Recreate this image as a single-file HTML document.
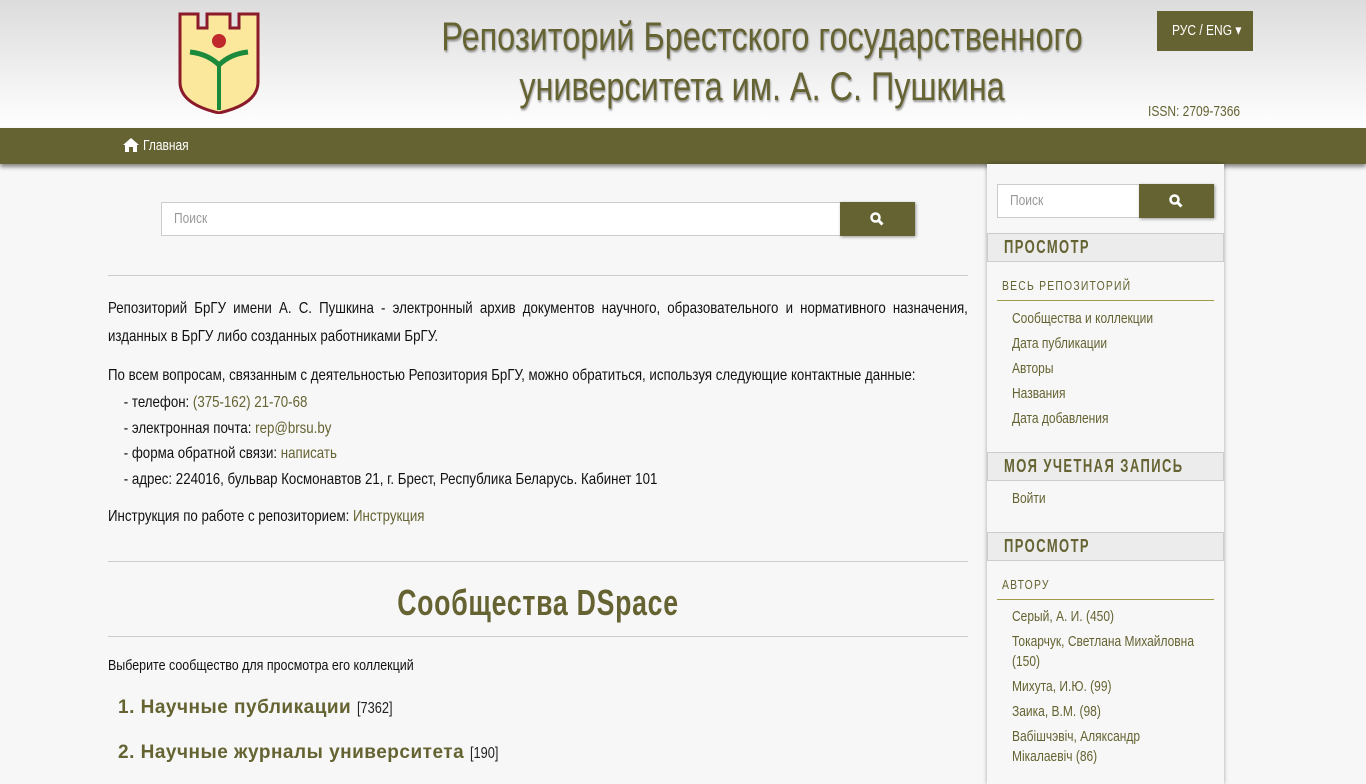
<!DOCTYPE html>
<html><head><meta charset="utf-8"><style>
*{box-sizing:border-box;margin:0;padding:0}
body{width:1366px;height:768px;overflow:hidden;background:#f7f7f7;font-family:"Liberation Sans",sans-serif;color:#111;font-size:16px;position:relative}
a{color:#656332;text-decoration:none}
.n{transform:scaleX(.8);transform-origin:0 0}
.m{transform:scaleX(.83);transform-origin:0 0}
.hdr{position:absolute;left:0;top:0;width:1366px;height:128px;background:linear-gradient(#dcdcdc,#fff)}
.title{position:absolute;left:262px;top:12px;width:1000px;text-align:center;font-size:40px;line-height:50px;color:#656332;text-shadow:1px 2px 2px #999;white-space:nowrap;transform:scaleX(.81);transform-origin:50% 0}
.lang{position:absolute;left:1157px;top:11px;width:96px;height:40px;background:#656332;color:#fff;font-size:15px;line-height:40px}
.issn{position:absolute;left:1148px;top:103px;font-size:15px;color:#656332;white-space:nowrap}
.nav{position:absolute;left:0;top:128px;width:1366px;height:36px;background:#656332;box-shadow:0 3px 4px rgba(0,0,0,.45);color:#fff;font-size:15px}
.side{position:absolute;left:987px;top:164px;width:237px;height:620px;background:#f7f7f7;box-shadow:0 0 4px rgba(0,0,0,.35)}
.srch{position:absolute;height:34px;border:1px solid #ccc;background:#fff;color:#999;font-size:15px;line-height:32px;padding-left:12px}
.btn{position:absolute;height:34px;background:#656332;box-shadow:1px 1px 3px rgba(0,0,0,.4)}
.sh{position:absolute;left:0;width:237px;height:29px;background:#ececec;border:1px solid #ccc;color:#656332;font-weight:bold;font-size:18px;line-height:27px;overflow:hidden}
.sh span{position:absolute;left:16px;top:0;white-space:nowrap;letter-spacing:2px;transform:scaleX(.72);transform-origin:0 0}
.sub{position:absolute;left:10px;width:217px;height:24px;border-bottom:1px solid #9e9a46;color:#656332;font-size:13px}
.sub span{position:absolute;left:5px;top:1px;white-space:nowrap;letter-spacing:1.5px;transform:scaleX(.8);transform-origin:0 0}
.lk{position:absolute;left:25px;font-size:15px;color:#656332;line-height:25px;white-space:nowrap}
.main{position:absolute;left:108px;width:1036px}
hr{position:absolute;left:108px;width:860px;border:0;border-top:1px solid #ccc}
p{font-size:16px;line-height:26px}
</style></head><body>
<div class="hdr">
<svg style="position:absolute;left:178px;top:12px" width="82" height="102" viewBox="0 0 82 102">
<path d="M2 2H20V16H29V2H52V16H61V2H80V70Q80 92 41 101Q2 92 2 70Z" fill="#fbe89c" stroke="#8b1a2a" stroke-width="3"/>
<circle cx="41" cy="29" r="7" fill="#c0282c"/>
<path d="M12 40Q30 42 41 53Q52 42 70 40" fill="none" stroke="#1c8a3c" stroke-width="5"/>
<rect x="39" y="50" width="4" height="48" fill="#1c8a3c"/>
</svg>
<div class="title">Репозиторий Брестского государственного<br>университета им. А. С. Пушкина</div>
<div class="lang"><div class="n" style="position:absolute;left:15px;white-space:nowrap">РУС / ENG ▾</div></div>
<div class="issn n">ISSN: 2709-7366</div>
</div>
<div class="nav"><svg style="position:absolute;left:123px;top:10px" width="16" height="14" viewBox="0 0 16 14"><path d="M8 0L0 7H2V14H6V9H10V14H14V7H16Z" fill="#fff"/></svg><span class="n" style="position:absolute;left:143px;top:9px">Главная</span></div>

<div class="srch" style="left:161px;top:202px;width:680px"><span class="n" style="display:inline-block">Поиск</span></div>
<div class="btn" style="left:840px;top:202px;width:75px"><svg style="position:absolute;left:30px;top:10px" width="14" height="14" viewBox="0 0 14 14"><circle cx="5.5" cy="5.5" r="4" fill="none" stroke="#fff" stroke-width="2.5"/><path d="M8.5 8.5L12.5 12.5" stroke="#fff" stroke-width="3"/></svg></div>
<hr style="top:275px">
<div class="main m" style="top:295px">
<p style="text-align:justify;line-height:28px">Репозиторий БрГУ имени А. С. Пушкина - электронный архив документов научного, образовательного и нормативного назначения, изданных в БрГУ либо созданных работниками БрГУ.</p>
<p style="margin-top:12px">По всем вопросам, связанным с деятельностью Репозитория БрГУ, можно обратиться, используя следующие контактные данные:</p>
<p style="padding-left:19px;line-height:25.7px;margin-top:1px">- телефон: <a>(375-162) 21-70-68</a><br>- электронная почта: <a>rep@brsu.by</a><br>- форма обратной связи: <a>написать</a><br>- адрес: 224016, бульвар Космонавтов 21, г. Брест, Республика Беларусь. Кабинет 101</p>
<p style="margin-top:11px">Инструкция по работе с репозиторием: <a>Инструкция</a></p>
</div>
<hr style="top:561px">
<div style="position:absolute;left:108px;width:860px;top:582px;text-align:center;font-size:36px;font-weight:bold;color:#656332;letter-spacing:1px;transform:scaleX(.74)">Сообщества DSpace</div>
<hr style="top:636px">
<div class="main m" style="top:657px;font-size:15px">Выберите сообщество для просмотра его коллекций</div>
<div class="main" style="top:697px;left:118px;font-size:19px;font-weight:bold;color:#656332;letter-spacing:.5px">1. Научные публикации <span class="n" style="display:inline-block;font-weight:normal;font-size:16px;color:#222;letter-spacing:0">[7362]</span></div>
<div class="main" style="top:742px;left:118px;font-size:19px;font-weight:bold;color:#656332;letter-spacing:.5px">2. Научные журналы университета <span class="n" style="display:inline-block;font-weight:normal;font-size:16px;color:#222;letter-spacing:0">[190]</span></div>

<div class="side">
<div class="srch" style="left:10px;top:20px;width:143px"><span class="n" style="display:inline-block">Поиск</span></div>
<div class="btn" style="left:152px;top:20px;width:75px"><svg style="position:absolute;left:30px;top:10px" width="14" height="14" viewBox="0 0 14 14"><circle cx="5.5" cy="5.5" r="4" fill="none" stroke="#fff" stroke-width="2.5"/><path d="M8.5 8.5L12.5 12.5" stroke="#fff" stroke-width="3"/></svg></div>
<div class="sh" style="top:69px"><span>ПРОСМОТР</span></div>
<div class="sub" style="top:113px"><span>ВЕСЬ РЕПОЗИТОРИЙ</span></div>
<div class="lk n" style="top:142px">Сообщества и коллекции<br>Дата публикации<br>Авторы<br>Названия<br>Дата добавления</div>
<div class="sh" style="top:288px"><span>МОЯ УЧЕТНАЯ ЗАПИСЬ</span></div>
<div class="lk n" style="top:322px">Войти</div>
<div class="sh" style="top:368px"><span>ПРОСМОТР</span></div>
<div class="sub" style="top:412px"><span>АВТОРУ</span></div>
<div class="lk n" style="top:443px;line-height:20px">Серый, А. И. (450)<div style="height:5px"></div>Токарчук, Светлана Михайловна<br>(150)<div style="height:5px"></div>Михута, И.Ю. (99)<div style="height:5px"></div>Заика, В.М. (98)<div style="height:5px"></div>Вабішчэвіч, Аляксандр<br>Мікалаевіч (86)</div>
</div>
</body></html>
